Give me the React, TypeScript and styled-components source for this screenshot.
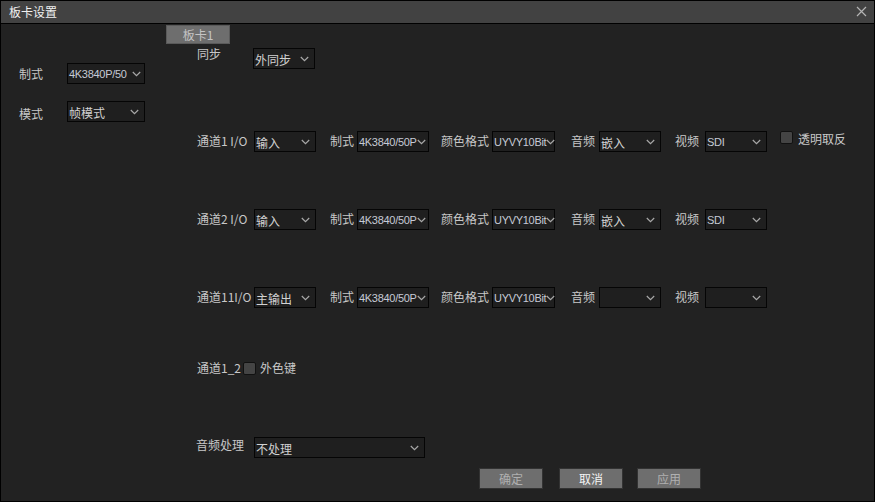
import React from "react";
import styled, { createGlobalStyle } from "styled-components";

const GlobalStyle = createGlobalStyle`
  body {
    margin: 0;
    background: #222;
    font-family: "Noto Sans CJK SC", "Noto Sans", sans-serif;
  }
  * { box-sizing: border-box; }
`;

const Window = styled.div`
  width: 875px;
  height: 502px;
  border: 1px solid #000;
  background: #222222;
  display: flex;
  flex-direction: column;
  color: #c8c8c8;
  font-size: 12px;
  overflow: hidden;
`;

const TitleBar = styled.div`
  height: 23px;
  flex: none;
  background: #424242;
  border-bottom: 1px solid #000;
  display: flex;
  align-items: center;
  justify-content: space-between;
  padding: 0 8px 1px 8px;
`;

const Title = styled.span`
  color: #f0f0f0;
  font-size: 12px;
  line-height: 14px;
`;

const CloseBtn = styled.button`
  width: 12px;
  height: 12px;
  padding: 0;
  border: none;
  background: transparent;
  display: flex;
  align-items: center;
  justify-content: center;
  margin-right: -1px;
`;

const Body = styled.div`
  flex: 1;
  display: grid;
  grid-template-columns: 165px 1fr;
  padding-top: 1px;
`;

const LeftPane = styled.div`
  display: flex;
  flex-direction: column;
  gap: 17px;
  padding: 38px 0 0 18px;
`;

const MainPane = styled.div`
  display: flex;
  flex-direction: column;
  align-items: flex-start;
`;

const Tab = styled.div`
  width: 64px;
  height: 19px;
  background: #6e6e6e;
  border: 1px solid #5a5a5a;
  color: #c4c4c4;
  font-size: 12px;
  display: flex;
  align-items: center;
  justify-content: center;
  line-height: 14px;
`;

const Content = styled.div`
  display: flex;
  flex-direction: column;
  padding-left: 31px;
  width: 100%;
`;

const Row = styled.div<{ $mt?: number; $top?: boolean }>`
  display: flex;
  align-items: ${(p) => (p.$top ? "flex-start" : "center")};
  margin-top: ${(p) => p.$mt ?? 0}px;
  height: 21px;
`;

const Label = styled.span<{ $w?: number; $ml?: number; $dy?: number }>`
  display: inline-block;
  width: ${(p) => (p.$w ? `${p.$w}px` : "auto")};
  margin-left: ${(p) => p.$ml ?? 0}px;
  white-space: nowrap;
  line-height: 14px;
  color: #c8c8c8;
  position: relative;
  top: ${(p) => p.$dy ?? 0}px;
  flex: none;
`;

const SelectBox = styled.div<{ $w: number; $ml?: number; $tight?: boolean }>`
  width: ${(p) => p.$w}px;
  height: 21px;
  margin-left: ${(p) => p.$ml ?? 0}px;
  border: 1px solid #050505;
  background: #1f1f1f;
  display: flex;
  align-items: center;
  justify-content: space-between;
  padding: 0 ${(p) => (p.$tight ? 3 : 5)}px 0 1px;
  flex: none;
`;

const SelectText = styled.span<{ $latin?: boolean }>`
  color: ${(p) => (p.$latin ? "#c6cad6" : "#d2d2d2")};
  font-family: ${(p) =>
    p.$latin ? `"Liberation Sans", Arial, sans-serif` : `"Noto Sans CJK SC", sans-serif`};
  font-size: ${(p) => (p.$latin ? "11px" : "12px")};
  letter-spacing: ${(p) => (p.$latin ? "-0.3px" : "0")};
  white-space: nowrap;
  line-height: 14px;
  margin-top: ${(p) => (p.$latin ? 1 : 2)}px;
`;

const Check = styled.span<{ $ml?: number; $dy?: number }>`
  width: 13px;
  height: 13px;
  margin-left: ${(p) => p.$ml ?? 0}px;
  border: 1px solid #111;
  border-radius: 2px;
  background: #444;
  flex: none;
  position: relative;
  top: ${(p) => p.$dy ?? 0}px;
`;

const ButtonRow = styled.div`
  display: flex;
  margin: 10px 0 0 282px;
  gap: 16px;
`;

const Button = styled.button<{ $active?: boolean }>`
  width: 64px;
  height: 21px;
  background: #6e6e6e;
  border: 1px solid #333;
  color: ${(p) => (p.$active ? "#f4f4f4" : "#b0b0b0")};
  font-family: "Noto Sans CJK SC", sans-serif;
  font-size: 12px;
  line-height: 14px;
  padding: 0;
`;

function Chevron() {
  return (
    <svg width="9" height="6" viewBox="0 0 9 6" style={{ flex: "none" }}>
      <polyline points="0.8,1 4.5,4.6 8.2,1" fill="none" stroke="#a8a8a8" strokeWidth="1.2" />
    </svg>
  );
}

function Select({
  w,
  ml,
  value,
  latin,
  tight,
}: {
  w: number;
  ml?: number;
  value?: string;
  latin?: boolean;
  tight?: boolean;
}) {
  return (
    <SelectBox $w={w} $ml={ml} $tight={tight}>
      <SelectText $latin={latin}>{value ?? ""}</SelectText>
      <Chevron />
    </SelectBox>
  );
}

type Channel = {
  name: string;
  io: string;
  audio?: string;
  video?: string;
  invert?: boolean;
  mt: number;
};

const channels: Channel[] = [
  { name: "通道1 I/O", io: "输入", audio: "嵌入", video: "SDI", invert: true, mt: 62 },
  { name: "通道2 I/O", io: "输入", audio: "嵌入", video: "SDI", mt: 57 },
  { name: "通道11I/O", io: "主输出", mt: 57 },
];

function ChannelRow({ ch }: { ch: Channel }) {
  return (
    <Row $mt={ch.mt}>
      <Label $w={57} $dy={-1}>{ch.name}</Label>
      <Select w={62} value={ch.io} />
      <Label $ml={14} $w={27} $dy={-1}>制式</Label>
      <Select w={72} value="4K3840/50P" latin tight />
      <Label $ml={12} $w={51} $dy={-1}>颜色格式</Label>
      <Select w={63} value="UYVY10Bit" latin tight />
      <Label $ml={16} $w={28} $dy={-1}>音频</Label>
      <Select w={62} value={ch.audio} />
      <Label $ml={14} $w={30} $dy={-1}>视频</Label>
      <Select w={62} value={ch.video} latin={!!ch.video} />
      {ch.invert && (
        <>
          <Check $ml={13} $dy={-4} />
          <Label $ml={5} $dy={-3}>透明取反</Label>
        </>
      )}
    </Row>
  );
}

export default function App() {
  return (
    <>
      <GlobalStyle />
      <Window>
        <TitleBar>
          <Title>板卡设置</Title>
          <CloseBtn aria-label="close">
            <svg width="11" height="11" viewBox="0 0 11 11">
              <path d="M1 1 L10 10 M10 1 L1 10" stroke="#b4b4b4" strokeWidth="1.2" />
            </svg>
          </CloseBtn>
        </TitleBar>
        <Body>
          <LeftPane>
            <Row>
              <Label $w={48}>制式</Label>
              <Select w={78} value="4K3840P/50" latin tight />
            </Row>
            <Row>
              <Label $w={48} $dy={2}>模式</Label>
              <Select w={78} value="帧模式" />
            </Row>
          </LeftPane>
          <MainPane>
            <Tab>板卡1</Tab>
            <Content>
              <Row $mt={4} $top>
                <Label $w={56} $dy={-1}>同步</Label>
                <Select w={62} value="外同步" />
              </Row>
              {channels.map((ch) => (
                <ChannelRow key={ch.name} ch={ch} />
              ))}
              <Row $mt={52} style={{ height: 16 }}>
                <Label $w={46}>通道1_2</Label>
                <Check />
                <Label $ml={4}>外色键</Label>
              </Row>
              <Row $mt={61}>
                <Label $w={58} $dy={-3} style={{ marginLeft: -1 }}>音频处理</Label>
                <Select w={171} value="不处理" />
              </Row>
              <ButtonRow>
                <Button>确定</Button>
                <Button $active>取消</Button>
                <Button style={{ marginLeft: -2 }}>应用</Button>
              </ButtonRow>
            </Content>
          </MainPane>
        </Body>
      </Window>
    </>
  );
}
